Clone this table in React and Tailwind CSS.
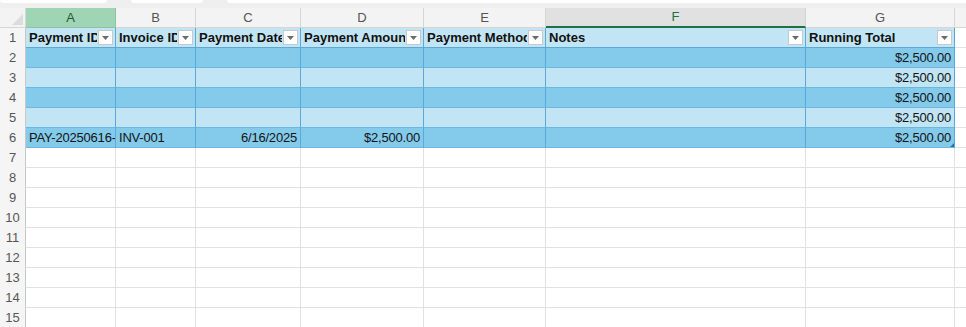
const cols = [
  { key: 'A', w: 'w-[90px]', title: 'Payment ID' },
  { key: 'B', w: 'w-[80px]', title: 'Invoice ID' },
  { key: 'C', w: 'w-[105px]', title: 'Payment Date' },
  { key: 'D', w: 'w-[123px]', title: 'Payment Amount' },
  { key: 'E', w: 'w-[122px]', title: 'Payment Method' },
  { key: 'F', w: 'w-[260px]', title: 'Notes' },
  { key: 'G', w: 'w-[149px]', title: 'Running Total' },
]

const data = [
  { G: '$2,500.00' },
  { G: '$2,500.00' },
  { G: '$2,500.00' },
  { G: '$2,500.00' },
  { A: 'PAY-20250616-', B: 'INV-001', C: '6/16/2025', D: '$2,500.00', G: '$2,500.00' },
]

const rightAligned = ['C', 'D', 'G']

function FilterButton() {
  return (
    <span className="shrink-0 w-[15px] h-[15px] bg-white border border-[#c9c9c9] flex items-center justify-center">
      <svg width="7" height="4" viewBox="0 0 7 4">
        <path d="M0 0h7L3.5 4z" fill="#6b6b6b" />
      </svg>
    </span>
  )
}

function RowHeader({ n }) {
  return (
    <div className="w-[26px] h-5 shrink-0 flex items-center justify-center bg-[#f5f5f5] border-r border-[#c8c8c8] text-[13px] text-[#555]">
      {n}
    </div>
  )
}

function ColumnHeader({ col }) {
  const base = 'h-5 shrink-0 flex items-center justify-center text-[13px] border-r border-b'
  if (col.key === 'A') {
    return <div className={`${col.w} ${base} bg-[#9fd4b4] border-[#8cc4a3] text-[#1d5a3a]`}>{col.key}</div>
  }
  if (col.key === 'F') {
    return <div className={`${col.w} ${base} bg-[#e1e1e1] border-r-[#d4d4d4] border-b-2 border-b-[#1e7145] text-[#1e7145]`}>{col.key}</div>
  }
  return <div className={`${col.w} ${base} bg-[#f3f3f3] border-[#d6d6d6] text-[#555]`}>{col.key}</div>
}

function TableRow({ index, row }) {
  const band = index % 2 === 0 ? 'bg-[#83caeb]' : 'bg-[#c1e5f5]'
  return (
    <div className="flex">
      <RowHeader n={index + 2} />
      {cols.map(col => (
        <div
          key={col.key}
          className={`${col.w} h-5 shrink-0 relative flex items-center px-[3px] overflow-hidden whitespace-nowrap text-[13px] tracking-[-0.2px] text-[#141414] border-b border-r border-b-[#6db6df] border-r-[#5aa9d8] ${band} ${rightAligned.includes(col.key) ? 'justify-end' : 'justify-start'}`}
        >
          {row[col.key] || ''}
          {index === 4 && col.key === 'G' && (
            <svg className="absolute right-0 bottom-0" width="4" height="4" viewBox="0 0 4 4">
              <path d="M4 0v4H0z" fill="#2f6fa8" />
            </svg>
          )}
        </div>
      ))}
      <div className="flex-1 h-5 border-b border-[#e1e1e1] bg-white" />
    </div>
  )
}

function EmptyRow({ n }) {
  return (
    <div className="flex">
      <RowHeader n={n} />
      {cols.map(col => (
        <div key={col.key} className={`${col.w} h-5 shrink-0 bg-white border-r border-b border-[#e1e1e1]`} />
      ))}
      <div className="flex-1 h-5 border-b border-[#e1e1e1] bg-white" />
    </div>
  )
}

export default function App() {
  return (
    <div className="w-[966px] h-[327px] overflow-hidden bg-white select-none" style={{ fontFamily: '"Liberation Sans", Arial, sans-serif' }}>
      {/* formula bar edge */}
      <div className="h-2 bg-[#efefef] flex gap-[24px] items-start">
        <div className="w-[107px] h-[3px] bg-white rounded-b-[3px]" />
        <div className="w-[72px] h-[3px] bg-white rounded-b-[3px]" />
        <div className="flex-1 h-[3px] bg-white rounded-bl-[3px]" />
      </div>

      {/* column letters */}
      <div className="flex">
        <div className="w-[26px] h-5 shrink-0 bg-[#f3f3f3] border-r border-b border-[#d6d6d6] flex items-end justify-end p-[2px]">
          <svg width="11" height="11" viewBox="0 0 11 11">
            <path d="M11 0v11H0z" fill="#dcdcdc" />
          </svg>
        </div>
        {cols.map(col => (
          <ColumnHeader key={col.key} col={col} />
        ))}
        <div className="flex-1 h-5 bg-[#f3f3f3] border-b border-[#d6d6d6]" />
      </div>

      {/* table header row */}
      <div className="flex">
        <RowHeader n={1} />
        {cols.map(col => (
          <div
            key={col.key}
            className={`${col.w} h-5 shrink-0 flex items-center gap-[1px] pl-[3px] pr-[2px] bg-[#c1e5f5] border-r border-b border-r-[#5aa9d8] border-b-[#5aa9d8] text-[13px] font-bold text-[#111]`}
          >
            <span className="flex-1 min-w-0 overflow-hidden whitespace-nowrap">{col.title}</span>
            <FilterButton />
          </div>
        ))}
        <div className="flex-1 h-5 border-b border-[#e1e1e1] bg-white" />
      </div>

      {data.map((row, i) => (
        <TableRow key={i} index={i} row={row} />
      ))}

      {[7, 8, 9, 10, 11, 12, 13, 14, 15].map(n => (
        <EmptyRow key={n} n={n} />
      ))}
    </div>
  )
}
